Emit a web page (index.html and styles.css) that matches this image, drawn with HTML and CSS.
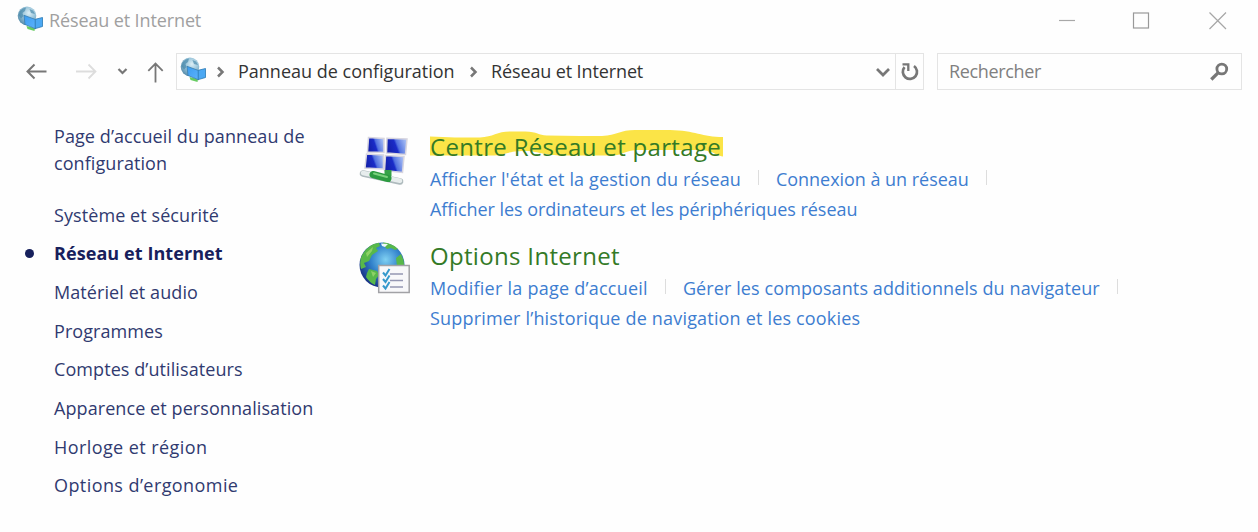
FILE: index.html
```html
<!DOCTYPE html>
<html lang="fr">
<head>
<meta charset="utf-8">
<title>Réseau et Internet</title>
<link rel="stylesheet" href="styles.css">
</head>
<body>
<svg class="defs" width="0" height="0" aria-hidden="true">
  <defs>
    <radialGradient id="pale" cx=".6" cy=".35" r=".8"><stop offset="0" stop-color="#dceff6"/><stop offset=".45" stop-color="#96c2d8"/><stop offset="1" stop-color="#3f7899"/></radialGradient>
    <linearGradient id="panel" x1="0" y1="0" x2="1" y2="1"><stop offset="0" stop-color="#3b9cf0"/><stop offset="1" stop-color="#5cb2fb"/></linearGradient>
    <linearGradient id="screen" x1="0" y1=".6" x2="1" y2=".3"><stop offset="0" stop-color="#1420a8"/><stop offset=".45" stop-color="#1a2cc8"/><stop offset=".55" stop-color="#5272e0"/><stop offset="1" stop-color="#a9c0f5"/></linearGradient>
    <radialGradient id="ocean" cx=".58" cy=".38" r=".65"><stop offset="0" stop-color="#7fd0f2"/><stop offset=".5" stop-color="#3282cb"/><stop offset="1" stop-color="#172f83"/></radialGradient>
    <symbol id="net" viewBox="0 0 26 26">
      <circle cx="10" cy="9.800" r="9.300" fill="url(#pale)"/>
      <path d="M3 5Q6 1.500 9 1.500L8 5L5.500 7L6.500 10L4 12.500L1.500 9Z M12.500 3L16 4.500L18 8L14 7Z" fill="#4485a8" opacity=".65"/>
      <path d="M9.500 20L18 22L17.500 25L10.500 23Z" fill="#68cc62"/>
      <path d="M7 9.300L18.500 13.500V22.800L8 18.500Z" fill="url(#panel)" stroke="#3a7fae" stroke-width=".8"/>
      <path d="M18.200 13.300L25.500 11.500V20.500L18.200 22.600Z" fill="#4ba8f3" stroke="#2a78b2" stroke-width=".8"/>
    </symbol>
  </defs>
</svg>
<div class="window">
  <header class="titlebar">
    <svg class="net-icon"><use href="#net"/></svg>
    <span class="caption">Réseau et Internet</span>
    <svg class="controls" width="170" height="20" viewBox="0 0 170 20" fill="none">
      <path d="M1 10.500H17" stroke="#a8a8a8" stroke-width="1.200"/>
      <rect x="75.500" y="3" width="15" height="15" stroke="#999" stroke-width="1.200"/>
      <path d="M151.500 2.500L168 19M168 2.500L151.500 19" stroke="#a6a6a6" stroke-width="1.200"/>
    </svg>
  </header>
  <nav class="toolbar">
    <svg class="arrows" width="150" height="24" viewBox="0 0 150 24" fill="none">
      <path d="M20.500 11.500H1.500M8.500 4.500L1.500 11.500L8.500 18.500" stroke="#777" stroke-width="2"/>
      <path d="M50 11.500H69.500M62.500 4.500L69.500 11.500L62.500 18.500" stroke="#ddd" stroke-width="1.800"/>
      <path d="M92.500 9L96.500 13L100.500 9" stroke="#777" stroke-width="2.200"/>
      <path d="M129.500 22.500V3.500M122.300 10.800L129.500 3.500L136.700 10.800" stroke="#777" stroke-width="1.800"/>
    </svg>
    <div class="address">
      <svg class="net-icon"><use href="#net"/></svg>
      <svg class="chev first" viewBox="0 0 10 14"><path d="M2 2.500L6.500 7L2 11.500"/></svg>
      <span class="crumb root">Panneau de configuration</span>
      <svg class="chev second" viewBox="0 0 10 14"><path d="M2 2.500L6.500 7L2 11.500"/></svg>
      <span class="crumb leaf">Réseau et Internet</span>
      <svg class="drop" width="16" height="12" viewBox="0 0 16 12" fill="none"><path d="M2 3L8 9L14 3" stroke="#777" stroke-width="2.700"/></svg>
      <span class="refresh">
        <svg width="20" height="20" viewBox="0 0 20 20" fill="none"><path d="M4.500 5.200A7.100 7.100 0 1 0 14 4" stroke="#777" stroke-width="2.700"/><path d="M2.500 2.300H8.300V9" stroke="#777" stroke-width="2.300"/></svg>
      </span>
    </div>
    <div class="search">
      <span>Rechercher</span>
      <svg width="20" height="20" viewBox="0 0 20 20" fill="none" stroke="#777"><circle cx="12.800" cy="7" r="4.900" stroke-width="2.800"/><path d="M9 10.800L2.300 17.500" stroke-width="3.300"/></svg>
    </div>
  </nav>
  <div class="content">
    <aside class="sidebar">
      <a class="home">Page d’accueil du panneau de configuration</a>
      <ul class="categories">
        <li>Système et sécurité</li>
        <li class="current">Réseau et Internet</li>
        <li>Matériel et audio</li>
        <li>Programmes</li>
        <li>Comptes d’utilisateurs</li>
        <li>Apparence et personnalisation</li>
        <li class="loose">Horloge et région</li>
        <li class="loose">Options d’ergonomie</li>
      </ul>
    </aside>
    <main class="groups">
      <section class="group">
        <svg class="group-icon network" width="54" height="54" viewBox="0 0 54 54">
          <g fill="url(#screen)" stroke="#d7d5df" stroke-width="1.500">
            <path d="M9.500 3.500L25 4.500V18.500L8.500 18Z"/><path d="M28 4.300L48 5L46.500 20.500L27.500 19Z"/>
            <path d="M7.500 20L24.500 21V35L6 34Z"/><path d="M26.500 21.500L45 22.500L43.500 38.500L25.500 36.500Z"/>
          </g>
          <path d="M29 36V42" stroke="#35a247" stroke-width="7"/>
          <path d="M4 39.500L41 47.500" stroke="#aebabd" stroke-width="6.500" stroke-linecap="round"/>
          <path d="M4 39L41 46.700" stroke="#e7eded" stroke-width="4.500" stroke-linecap="round"/>
          <path d="M14 40.500L29 44.500" stroke="#2c9b40" stroke-width="7" stroke-linecap="round"/>
          <path d="M15 39.500L28 43" stroke="#7ad17c" stroke-width="2" stroke-linecap="round"/>
        </svg>
        <div class="group-text">
          <h2><svg class="marker" width="293" height="28" viewBox="0 0 293 28"><path d="M0 6.500L25 7.500H50C63 7 67 1.500 80 1.500H95C108 2 108 5 117 5.500L150 6H172C187 5 190 0 205 0H240C265 .5 272 7 293 7V26.500C284 25 285 21 270 20H210C195 20 192 25.500 182 25.500H130C112 25 108 21 95 21C76 21 76 25.500 61 25.500H0Z" fill="#fbe447"/></svg><span>Centre Réseau et partage</span></h2>
          <div class="links"><a class="l1">Afficher l'état et la gestion du réseau</a><a class="l2">Connexion à un réseau</a></div>
          <div class="links"><a class="l3">Afficher les ordinateurs et les périphériques réseau</a></div>
        </div>
      </section>
      <section class="group">
        <svg class="group-icon" width="54" height="54" viewBox="0 0 54 54">
          <circle cx="23" cy="24" r="22.500" fill="url(#ocean)"/>
          <path d="M3 14Q9 3 20 1.700L21 5L17 7L19 10L13 14L10 20L5 22L7 26L2 28Q0 20 3 14Z M24 1.500Q33 2 39 8L36 9L32 7L28 8L25 5Z M10 28L18 30L20 34L17 38L16 44Q10 41 7 36L8 32Z M37 17L42 13Q46 20 45 28L38 25Z" fill="#58b84a"/>
          <path d="M7 12L14 6L13 10L8 16Z M12 30L17 32L14 36Z" fill="#9bd86d" opacity=".8"/>
          <path d="M22 2.500L29 3L26 6L23 5Z" fill="#eef8f8"/>
          <rect x="19.700" y="24.500" width="30.500" height="27" fill="#f8f8fa" stroke="#a2a2a6" stroke-width="1.500"/>
          <path d="M31 33H44M31 39.500H44M31 46H44" stroke="#9496b2" stroke-width="1.300"/>
          <path d="M24 31.500L26.500 34.500L30.500 28M24 38L26.500 41L30.500 34.500M24 44.500L26.500 47.500L30.500 41" fill="none" stroke="#3599cc" stroke-width="2"/>
        </svg>
        <div class="group-text">
          <h2><span>Options Internet</span></h2>
          <div class="links"><a class="l4">Modifier la page d’accueil</a><a class="l5">Gérer les composants additionnels du navigateur</a></div>
          <div class="links"><a class="l6">Supprimer l’historique de navigation et les cookies</a></div>
        </div>
      </section>
    </main>
  </div>
</div>
</body>
</html>
```
FILE: styles.css
```css
* { box-sizing: border-box; }
body { margin: 0; background: #fff; font: 18px/27px "Open Sans", "Noto Sans", sans-serif; overflow: hidden; }
.defs { position: absolute; }
svg { flex: none; display: block; }
span, a, li { white-space: nowrap; }
.window { width: 1258px; height: 532px; background: #fefefe; }
.titlebar { display: flex; align-items: center; height: 53px; padding: 0 30px 12px 17px; color: #a0a0a0; }
.net-icon { width: 26px; height: 26px; }
.titlebar .net-icon { margin-top: -3px; }
.caption { margin-left: 6px; letter-spacing: -.12px; }
.controls { margin-left: auto; margin-top: -1px; }
.toolbar { display: flex; height: 37px; align-items: center; padding-left: 26px; }
.address { display: flex; align-items: center; width: 748px; height: 37px; border: 1.500px solid #e4e4e4; padding-left: 3px; }
.address .net-icon { margin-top: -4px; }
.chev { width: 10px; height: 14px; fill: none; stroke: #777; stroke-width: 2.500; }
.chev.first { margin-left: 10px; }
.crumb { color: #333; }
.crumb.root { margin-left: 12px; width: 218px; }
.chev.second { margin-left: 13px; }
.crumb.leaf { margin-left: 12px; letter-spacing: -.12px; }
.drop { margin-left: auto; margin-right: 4px; }
.refresh { width: 28px; height: 100%; border-left: 1.500px solid #e4e4e4; display: flex; align-items: center; justify-content: center; }
.search { display: flex; align-items: center; justify-content: space-between; margin-left: 13px; width: 305px; height: 37px; border: 1.500px solid #e4e4e4; padding: 0 12px 0 11px; color: #808080; letter-spacing: -.35px; }
.content { display: flex; }
.sidebar { width: 359px; padding: 33px 0 0 54px; color: #303a70; letter-spacing: .08px; }
.home { display: block; width: 265px; white-space: normal; }
.categories { list-style: none; margin: 18.600px 0 0; padding: 0; }
.categories li { height: 38.700px; line-height: 38.700px; }
.categories .loose { letter-spacing: .42px; }
.current { font-weight: 700; color: #17205c; display: flex; align-items: center; }
.current::before { content: ""; width: 9px; height: 9px; border-radius: 50%; background: #17205c; margin: 0 20px 0 -29px; }
.groups { padding-top: 42px; }
.group { display: flex; height: 109px; }
.group-icon { width: 54px; height: 54px; }
.group-icon.network { margin-top: 2px; }
.group-text { margin-left: 17px; }
h2 { position: relative; margin: 0; height: 32px; font-size: 24px; line-height: 30px; font-weight: 400; letter-spacing: .32px; color: #347a26; }
h2 span { position: relative; }
.marker { position: absolute; left: 0; top: -2px; }
.links { display: flex; height: 30px; line-height: 30px; color: #3d7dd0; }
.links a { display: flex; align-items: center; }
.links:nth-child(2) a::after { content: ""; width: 1px; height: 15px; margin: -4px 17px 0; background: #ddd; }
.l1 { letter-spacing: .12px; }
.l2 { letter-spacing: -.03px; }
.l3 { letter-spacing: -.04px; }
.l4 { letter-spacing: .24px; }
.l5 { letter-spacing: .1px; }
.l6 { letter-spacing: .18px; }
```
